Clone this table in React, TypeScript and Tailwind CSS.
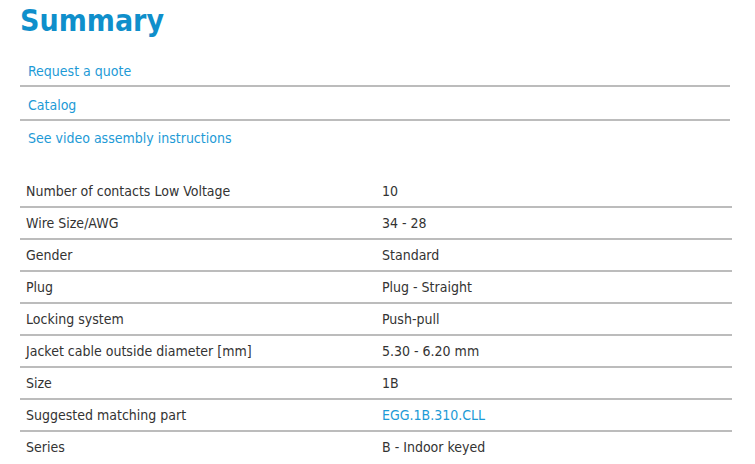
const links = ["Request a quote", "Catalog", "See video assembly instructions"];

type Spec = { label: string; value: string; link?: boolean };

const specs: Spec[] = [
  { label: "Number of contacts Low Voltage", value: "10" },
  { label: "Wire Size/AWG", value: "34 - 28" },
  { label: "Gender", value: "Standard" },
  { label: "Plug", value: "Plug - Straight" },
  { label: "Locking system", value: "Push-pull" },
  { label: "Jacket cable outside diameter [mm]", value: "5.30 - 6.20 mm" },
  { label: "Size", value: "1B" },
  { label: "Suggested matching part", value: "EGG.1B.310.CLL", link: true },
  { label: "Series", value: "B - Indoor keyed" },
];

export default function App() {
  return (
    <div className="min-h-[464px] w-[755px] bg-white pl-5 pr-[23px] font-['DejaVu_Sans_Condensed','DejaVu_Sans',sans-serif] text-[#333]">
      <h1 className="pt-[3px] text-[30px] font-bold leading-[36px] text-[#0f8fcb]">
        Summary
      </h1>

      <ul className="mt-[14px] mr-[2px]">
        {links.map((l, i) => (
          <li
            key={l}
            className={
              i < links.length - 1
                ? "flex h-[34px] items-center border-b-2 border-[#bcbcbc] pl-2 pt-[4px]"
                : "flex h-[34px] items-center pl-2"
            }
          >
            <a href="#" className="text-[14px] text-[#1d9ad6]">
              {l}
            </a>
          </li>
        ))}
      </ul>

      <div className="mt-[21px] text-[14px]">
        {specs.map((s, i) => (
          <div
            key={s.label}
            className={
              i < specs.length - 1
                ? "grid h-[32px] grid-cols-2 items-center border-b-2 border-[#bcbcbc]"
                : "grid h-[32px] grid-cols-2 items-center border-b-2 border-transparent"
            }
          >
            <div className="px-[6px]">{s.label}</div>
            <div className="px-[6px]">
              {s.link ? (
                <a href="#" className="text-[#1d9ad6]">
                  {s.value}
                </a>
              ) : (
                s.value
              )}
            </div>
          </div>
        ))}
      </div>
    </div>
  );
}
